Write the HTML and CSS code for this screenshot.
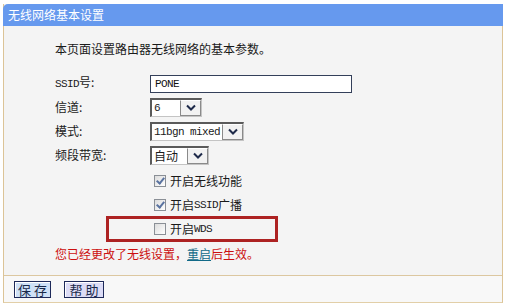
FILE: index.html
```html
<!DOCTYPE html>
<html lang="zh-CN">
<head>
    <meta charset="UTF-8">
    <title>无线网络基本设置</title>
    <link rel="stylesheet" href="styles.css">
</head>
<body>
    <div class="panel">
        <div class="title">无线网络基本设置</div>

        <div class="content">
            <p class="intro">本页面设置路由器无线网络的基本参数。</p>

            <div class="row">
                <span class="label"><span class="en">SSID</span>号:</span>
                <input class="text-input" type="text" value="PONE">
            </div>
            <div class="row">
                <span class="label">信道:</span>
                <span class="select">
                    <span class="value w-channel"><span class="en">6</span></span>
                    <span class="arrow"><svg width="10" height="7" viewBox="0 0 10 7"><path d="M1 1.5 L5 5.5 L9 1.5" fill="none" stroke="#1e2a4a" stroke-width="2"/></svg></span>
                </span>
            </div>
            <div class="row">
                <span class="label">模式:</span>
                <span class="select">
                    <span class="value w-mode"><span class="en">11bgn mixed</span></span>
                    <span class="arrow"><svg width="10" height="7" viewBox="0 0 10 7"><path d="M1 1.5 L5 5.5 L9 1.5" fill="none" stroke="#1e2a4a" stroke-width="2"/></svg></span>
                </span>
            </div>
            <div class="row">
                <span class="label">频段带宽:</span>
                <span class="select">
                    <span class="value w-band">自动</span>
                    <span class="arrow"><svg width="10" height="7" viewBox="0 0 10 7"><path d="M1 1.5 L5 5.5 L9 1.5" fill="none" stroke="#1e2a4a" stroke-width="2"/></svg></span>
                </span>
            </div>

            <label class="check-row first">
                <input class="check" type="checkbox" checked>开启无线功能
            </label>
            <label class="check-row">
                <input class="check" type="checkbox" checked>开启<span class="en">SSID</span>广播
            </label>
            <div class="highlight">
                <label class="check-row inner">
                    <input class="check" type="checkbox">开启<span class="en">WDS</span>
                </label>
            </div>

            <p class="notice">您已经更改了无线设置，<a href="#">重启</a>后生效。</p>
        </div>

        <div class="footer">
            <button class="btn save">保 存</button>
            <button class="btn help">帮 助</button>
        </div>
    </div>
</body>
</html>
```

FILE: styles.css
```css
body {
    margin: 0;
    padding: 4px 3px 0 3px;
    background: #ffffff;
    font-family: "Noto Sans CJK SC", sans-serif;
    font-size: 12px;
    color: #1a1a1a;
}
.panel {
    width: 500px;
    box-sizing: border-box;
    border-left: 1px solid #dcc497;
    border-right: 1px solid #dcc497;
    border-bottom: 1px solid #e2cfa8;
    background: #f4f4f4;
}
.title {
    height: 22px;
    line-height: 22px;
    margin: 0 -1px;
    padding-left: 5px;
    background: #6699ee;
    color: #ffffff;
    border-top-left-radius: 5px;
    font-size: 12px;
}
.content {
    height: 249px;
    box-sizing: border-box;
    padding: 15px 0 0 51px;
}
.intro {
    margin: 0 0 14px 0;
    line-height: 16px;
}
.en {
    font-family: "Liberation Mono", monospace;
    font-size: 11px;
    letter-spacing: -0.6px;
}
.row {
    display: flex;
    align-items: center;
    height: 24px;
}
.label {
    width: 95px;
    line-height: 16px;
}
.text-input {
    width: 202px;
    height: 18px;
    box-sizing: border-box;
    margin: 2px 0 0 0;
    padding: 0 4px;
    border: 1px solid #34405a;
    background: #ffffff;
    font-family: "Liberation Mono", monospace;
    font-size: 11px;
    letter-spacing: -0.6px;
    color: #111;
}
.select {
    display: inline-flex;
    height: 19px;
    box-sizing: border-box;
    border-top: 2px solid #5a5a5a;
    border-left: 2px solid #5a5a5a;
    border-right: 1px solid #c4c4c4;
    border-bottom: 1px solid #c4c4c4;
    background: #ffffff;
}
.value {
    display: flex;
    align-items: center;
    padding-left: 2px;
    line-height: 16px;
}
.w-channel { width: 26px; }
.w-mode { width: 68px; }
.w-band { width: 33px; }
.arrow {
    display: flex;
    align-items: center;
    justify-content: center;
    width: 21px;
    box-sizing: border-box;
    border: 1px solid #8a8a8a;
    border-top-color: #ffffff;
    background: #f2f2f2;
}
.check-row {
    display: flex;
    align-items: center;
    height: 24px;
    padding-left: 99px;
    line-height: 16px;
}
.check-row.first {
    margin-top: 2px;
}
.check {
    appearance: none;
    width: 12px;
    height: 12px;
    margin: 0 4px 0 0;
    border: 1px solid #8a8f96;
    background: linear-gradient(135deg, #dcdcdc 0%, #ffffff 100%);
    position: relative;
}
.check:checked::after {
    content: "";
    position: absolute;
    left: 3px;
    top: 0px;
    width: 3px;
    height: 6px;
    border-right: 2px solid #5a73a0;
    border-bottom: 2px solid #5a73a0;
    transform: rotate(40deg);
}
.highlight {
    width: 172px;
    height: 26px;
    box-sizing: border-box;
    margin: -1px 0 0 51px;
    border: 3px solid #ad2222;
}
.check-row.inner {
    height: 20px;
    padding-left: 45px;
}
.notice {
    margin: 4px 0 0 0;
    line-height: 16px;
    color: #cc1010;
}
.notice a {
    color: #116a88;
    text-decoration: underline;
}
.footer {
    display: flex;
    align-items: center;
    gap: 13px;
    height: 27px;
    box-sizing: border-box;
    padding-left: 10px;
    border-top: 1px solid #dcc7a0;
    background: #f8f8f8;
}
.btn {
    height: 17px;
    padding: 0;
    border: 1px solid #1e2a5a;
    box-shadow: inset 1px 1px 0 #ffffff;
    font-family: "Noto Sans CJK SC", sans-serif;
    font-size: 13px;
    line-height: 15px;
    white-space: nowrap;
    text-align: center;
    color: #1a2a4a;
}
.save {
    width: 37px;
    background: #cfe1f7;
}
.help {
    width: 40px;
    background: #dcdcf6;
}
```
